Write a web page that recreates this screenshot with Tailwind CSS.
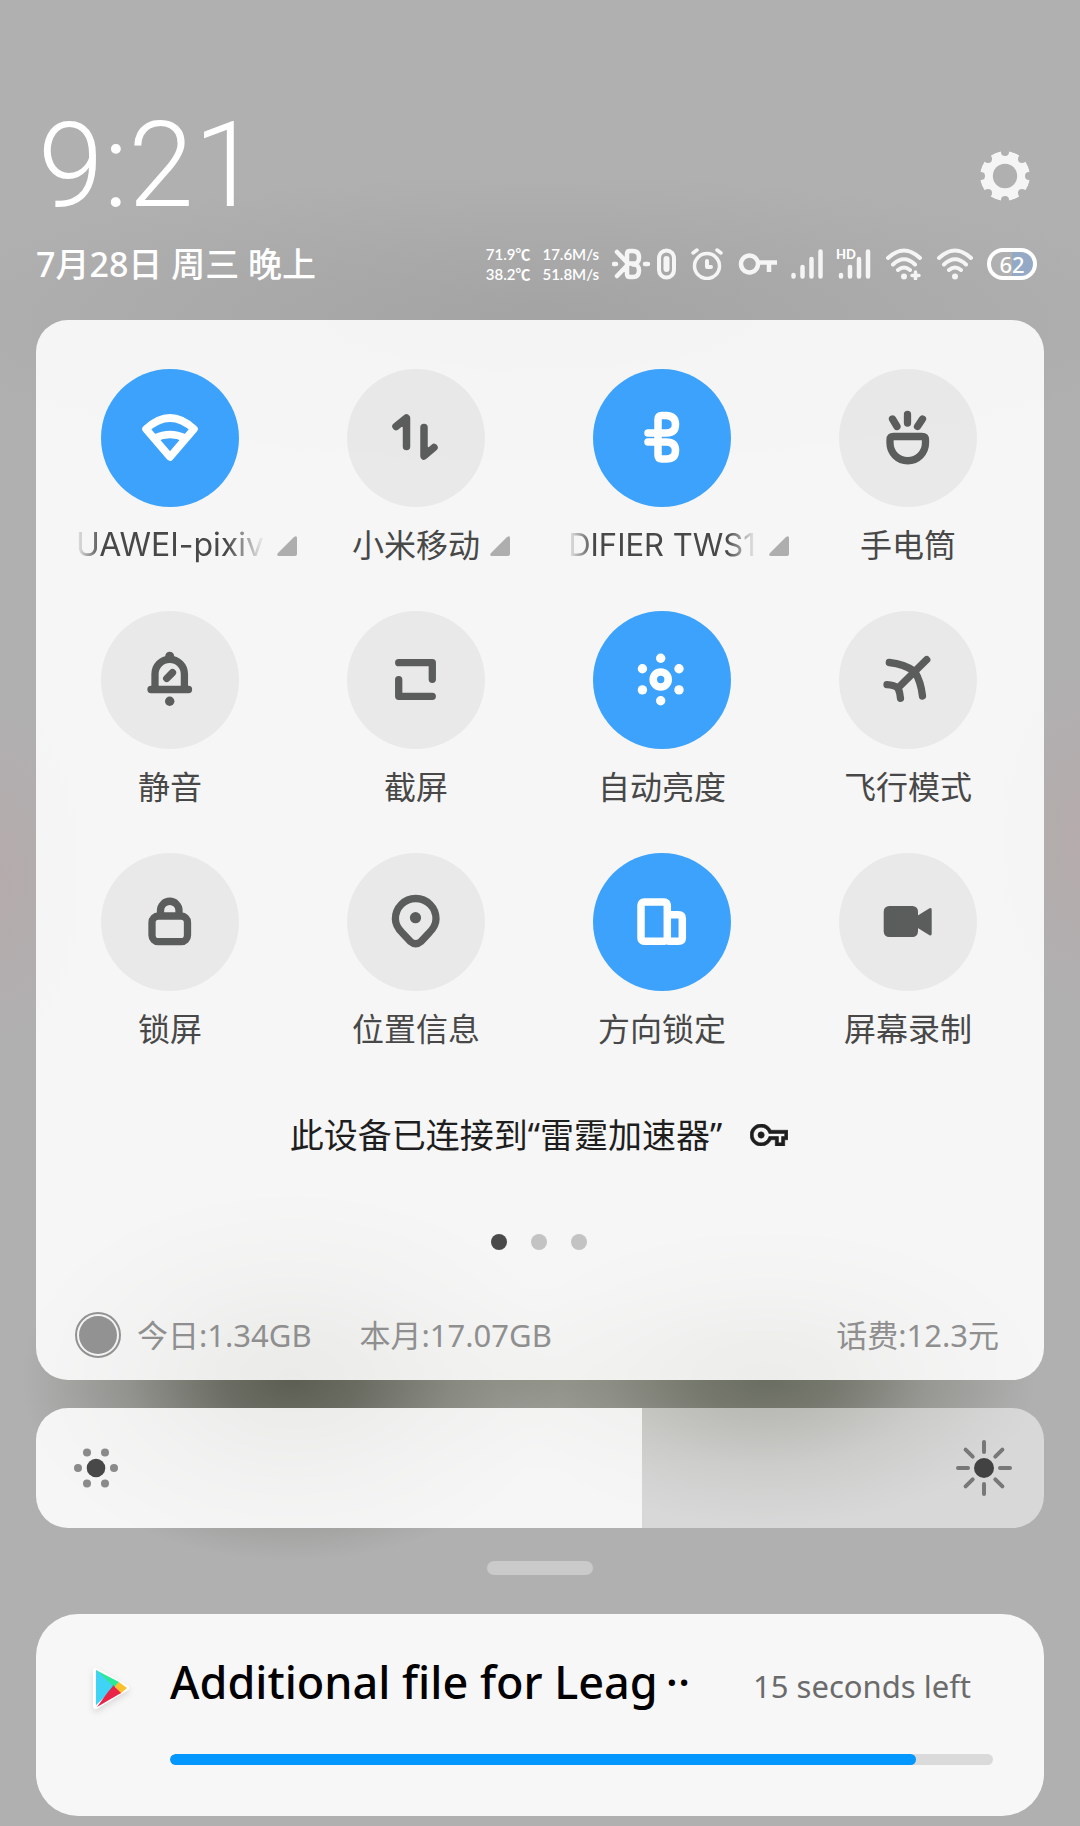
<!DOCTYPE html>
<html lang="zh-CN">

<head>
	<meta charset="UTF-8">
	<meta name="viewport" content="width=device-width, initial-scale=1.0">
	<script src="https://cdn.jsdelivr.net/npm/@tailwindcss/browser@4"></script>
	<title>控制中心</title>
</head>

<body class="min-h-screen bg-[#b0b0b0] bg-[radial-gradient(ellipse_25%_10%_at_27%_75.5%,#5c5e53_0%,#5c5e53cc_25%,#5c5e5355_60%,#5c5e5300_100%),radial-gradient(ellipse_25%_8%_at_71%_75.5%,#6a6d61_0%,#6a6d61cc_25%,#6a6d6150_60%,#6a6d6100_100%),radial-gradient(ellipse_45%_5%_at_50%_75.5%,#9a9b91_0%,#9a9b9100_100%),radial-gradient(ellipse_60%_8%_at_50%_17.5%,#a3a3a3_0%,#a3a3a300_100%),radial-gradient(ellipse_8%_10%_at_0%_48%,#b5abac_0%,#b5abac00_100%),radial-gradient(ellipse_8%_10%_at_100%_46%,#b5abac_0%,#b5abac00_100%)] px-9 pt-[104px] pb-2 font-['Noto_Sans','Noto_Sans_CJK_SC',sans-serif]">

	<!-- Clock and settings -->
	<header class="text-white">
		<div class="flex items-center justify-between pr-[14px] pl-[2px]">
			<time class="text-[118px] leading-[124px] font-light font-['Roboto',sans-serif]">9:21</time>
			<button type="button" aria-label="设置" class="mt-5">
				<svg class="size-[50px]" viewBox="0 0 50 50" aria-hidden="true">
					<mask id="gearMask">
						<circle cx="25" cy="25" r="25" fill="#fff" />
						<g fill="#000">
							<circle cx="25" cy="25" r="12.2" />
							<circle cx="25" cy="1" r="4" />
							<circle cx="42" cy="8" r="4" />
							<circle cx="49" cy="25" r="4" />
							<circle cx="42" cy="42" r="4" />
							<circle cx="25" cy="49" r="4" />
							<circle cx="8" cy="42" r="4" />
							<circle cx="1" cy="25" r="4" />
							<circle cx="8" cy="8" r="4" />
						</g>
					</mask>
					<circle cx="25" cy="25" r="25" fill="#f5f5f5" mask="url(#gearMask)" />
				</svg>
			</button>
		</div>

		<!-- Date and status icons -->
		<div class="flex h-[72px] items-center justify-between pr-[7px]">
			<p class="text-[34px] font-medium whitespace-nowrap">7月28日 周三 晚上</p>
			<div class="flex items-center gap-[13px]">
				<div class="grid grid-cols-[auto_auto] gap-x-3 text-right text-[15px] leading-5 font-semibold whitespace-nowrap font-['Lato','Noto_Sans_CJK_SC',sans-serif]">
					<span>71.9℃</span><span>17.6M/s</span>
					<span>38.2℃</span><span>51.8M/s</span>
				</div>
				<!-- Bluetooth with headset charge -->
				<svg class="h-8 w-16" viewBox="0 0 64 32" fill="none" stroke="#f5f5f5" stroke-width="4.500" stroke-linecap="round" stroke-linejoin="round" aria-hidden="true">
					<path d="M5 4L16 15.500M5 28L16 16.500M15 15.500V6Q15 3 18 3H21Q27 3 27 9.500T21 15.500H15M15 16.500V26Q15 29 18 29H21Q27 29 27 22.500T21 16.500" />
					<path d="M2 16H4M33 16H36" />
					<rect x="47" y="2.500" width="15" height="27" rx="7.500" stroke-width="4" />
					<path d="M54.500 11V21" stroke-width="6" />
				</svg>
				<!-- Alarm -->
				<svg class="h-8 w-9" viewBox="-2 0 36 32" fill="none" stroke="#f5f5f5" stroke-width="3.500" stroke-linecap="round" stroke-linejoin="round" aria-hidden="true">
					<circle cx="16" cy="18" r="12.500" />
					<path d="M16 13V19H20" stroke-width="4" />
					<path d="M2 5L6 2M30 5L26 2" />
				</svg>
				<!-- VPN key -->
				<svg class="h-8 w-10" viewBox="0 0 40 32" fill="none" stroke="#f5f5f5" stroke-width="4.500" stroke-linejoin="round" aria-hidden="true">
					<circle cx="11.500" cy="16" r="8.500" />
					<path d="M20 14.500H39M31 14.500V24" />
				</svg>
				<!-- Signal -->
				<svg class="h-8 w-8" viewBox="0 0 32 32" stroke="#f5f5f5" stroke-width="4.500" stroke-linecap="round" aria-hidden="true">
					<path d="M2.500 27V28.500M11.500 19V28.500M20.500 11V28.500M29.500 3.500V28.500" />
				</svg>
				<svg class="h-8 w-9 overflow-visible" viewBox="0 0 36 32" aria-hidden="true">
					<path d="M5 27V28.500M14 19V28.500M23 11V28.500M32 3.500V28.500" stroke="#f5f5f5" stroke-width="4.500" stroke-linecap="round" />
					<text x="0" y="11" class="fill-white text-[13px] font-black font-['Lato',sans-serif]">HD</text>
				</svg>
				<!-- Wi-Fi -->
				<svg class="h-8 w-[38px]" viewBox="0 0 38 32" fill="none" stroke="#f5f5f5" stroke-width="4" stroke-linecap="round" aria-hidden="true">
					<path d="M3 10Q19 -5 35 10M8 16.500Q19 6 30 16.500M13 22Q19 17 25 22" />
					<circle cx="19" cy="28.500" r="3" fill="#f5f5f5" stroke="none" />
					<path d="M30.500 24V31M27 27.500H34" stroke-width="3.500" />
				</svg>
				<svg class="h-8 w-[38px]" viewBox="0 0 38 32" fill="none" stroke="#f5f5f5" stroke-width="4" stroke-linecap="round" aria-hidden="true">
					<path d="M3 10Q19 -5 35 10M8 16.500Q19 6 30 16.500M13 22Q19 17 25 22" />
					<circle cx="19" cy="28.500" r="3" fill="#f5f5f5" stroke="none" />
				</svg>
				<!-- Battery -->
				<div class="flex h-8 w-[50px] items-center justify-center rounded-full border-4 border-white bg-linear-to-r from-[#b0b0b0] from-50% to-[#93a9c6] to-50% text-[22px] leading-none font-medium">62</div>
			</div>
		</div>
	</header>

	<main>
		<!-- Quick settings -->
		<section class="mt-5 rounded-[32px] bg-white/88 pt-[49px] pr-[13px] pb-5 pl-[11px] text-[#484848]">
			<div class="grid grid-cols-4 gap-y-[43px] text-[32px] leading-[46px] whitespace-nowrap">
				<button type="button" aria-pressed="true" class="flex flex-col items-center gap-[15px]">
					<span class="flex size-[138px] items-center justify-center rounded-full bg-[#3da2fb] text-white">
						<svg class="size-[72px]" viewBox="0 0 72 72" fill="none" stroke="currentColor" stroke-width="7.500" stroke-linecap="round" stroke-linejoin="round" aria-hidden="true">
							<path d="M12 27Q36 5 60 27L36 55Z" />
							<path d="M21 36Q36 29 51 36" />
						</svg>
					</span>
					<span class="relative font-['Inter',sans-serif]">
						<span class="flex w-[190px] justify-center overflow-hidden [mask-image:linear-gradient(to_right,transparent,black_14%,black_80%,transparent)]">UAWEI-pixiv</span>
						<svg class="absolute bottom-3 left-full ml-3 size-5" viewBox="0 0 20 20" aria-hidden="true"><path d="M20 2V18Q20 20 18 20H2Q-1 20 1 17L17 1Q20 -1 20 2Z" fill="#aeaeae" /></svg>
					</span>
				</button>

				<button type="button" aria-pressed="false" class="flex flex-col items-center gap-[15px]">
					<span class="flex size-[138px] items-center justify-center rounded-full bg-black/5 text-[#5b5c5c]">
						<svg class="size-[72px]" viewBox="0 0 72 72" fill="currentColor" stroke="currentColor" stroke-width="7.500" stroke-linecap="round" stroke-linejoin="round" aria-hidden="true">
							<path d="M16 24.500L26.500 16V44.500" fill="none" />
							<path d="M54 45.500L44 54V25.500" fill="none" />
							<path d="M25 19V26L20 24ZM45.500 51V44L50 46Z" stroke="none" />
						</svg>
					</span>
					<span class="relative">
						小米移动
						<svg class="absolute bottom-3 left-full ml-[10px] size-5" viewBox="0 0 20 20" aria-hidden="true"><path d="M20 2V18Q20 20 18 20H2Q-1 20 1 17L17 1Q20 -1 20 2Z" fill="#aeaeae" /></svg>
					</span>
				</button>

				<button type="button" aria-pressed="true" class="flex flex-col items-center gap-[15px]">
					<span class="flex size-[138px] items-center justify-center rounded-full bg-[#3da2fb] text-white">
						<svg class="size-[72px]" viewBox="0 0 72 72" fill="none" stroke="currentColor" stroke-width="7.500" stroke-linecap="round" stroke-linejoin="round" aria-hidden="true">
							<path d="M22 31H40Q49.500 31 49.500 22.500T40 13.500H36Q32 13.500 32 17.500V53Q32 57 36 57H40Q49.500 57 49.500 48.500T40 40H22" />
						</svg>
					</span>
					<span class="relative font-['Inter',sans-serif]">
						<span class="flex w-[190px] justify-center overflow-hidden text-[31px] [mask-image:linear-gradient(to_right,transparent,black_14%,black_84%,transparent)]">DIFIER TWS1</span>
						<svg class="absolute bottom-3 left-full ml-3 size-5" viewBox="0 0 20 20" aria-hidden="true"><path d="M20 2V18Q20 20 18 20H2Q-1 20 1 17L17 1Q20 -1 20 2Z" fill="#aeaeae" /></svg>
					</span>
				</button>

				<button type="button" aria-pressed="false" class="flex flex-col items-center gap-[15px]">
					<span class="flex size-[138px] items-center justify-center rounded-full bg-black/5 text-[#5b5c5c]">
						<svg class="size-[72px]" viewBox="0 0 72 72" fill="none" stroke="currentColor" stroke-width="7.300" stroke-linecap="round" stroke-linejoin="round" aria-hidden="true">
							<path d="M18 38Q18 34.500 21.500 34.500H50Q53.500 34.500 53.500 38V41A17.750 17.750 0 0 1 18 41Z" />
							<path d="M35.500 12.500V21M20.500 17L25 24.500M50.500 17L45.500 24.500" />
						</svg>
					</span>
					<span>手电筒</span>
				</button>

				<button type="button" aria-pressed="false" class="flex flex-col items-center gap-[15px]">
					<span class="flex size-[138px] items-center justify-center rounded-full bg-black/5 text-[#5b5c5c]">
						<svg class="size-[72px]" viewBox="0 0 72 72" fill="none" stroke="currentColor" stroke-width="7.300" stroke-linecap="round" stroke-linejoin="round" aria-hidden="true">
							<path d="M21 45V30A14.700 14.700 0 0 1 50.400 30V45" />
							<path d="M17 45.500H54.500M32.700 34.500L38.500 28.700" />
							<circle cx="35.700" cy="12.300" r="4.500" fill="currentColor" stroke="none" />
							<circle cx="35.700" cy="57.300" r="4.700" fill="currentColor" stroke="none" />
						</svg>
					</span>
					<span>静音</span>
				</button>

				<button type="button" class="flex flex-col items-center gap-[15px]">
					<span class="flex size-[138px] items-center justify-center rounded-full bg-black/5 text-[#5b5c5c]">
						<svg class="size-[72px]" viewBox="0 0 72 72" fill="none" stroke="currentColor" stroke-width="7.300" stroke-linecap="round" stroke-linejoin="round" aria-hidden="true">
							<path d="M18.700 18.700H52.300V35.300M18.700 35.700V52.300H52.300" />
						</svg>
					</span>
					<span>截屏</span>
				</button>

				<button type="button" aria-pressed="true" class="flex flex-col items-center gap-[15px]">
					<span class="flex size-[138px] items-center justify-center rounded-full bg-[#3da2fb] text-white">
						<svg class="size-[72px]" viewBox="0 0 72 72" fill="currentColor" aria-hidden="true">
							<circle cx="34.700" cy="35.500" r="7.500" fill="none" stroke="currentColor" stroke-width="7.600" />
							<circle cx="34.700" cy="14.300" r="4.700" />
							<circle cx="53" cy="24.700" r="4.700" />
							<circle cx="53" cy="45.900" r="4.700" />
							<circle cx="34.700" cy="56.700" r="4.700" />
							<circle cx="16.400" cy="45.900" r="4.700" />
							<circle cx="16.400" cy="24.700" r="4.700" />
						</svg>
					</span>
					<span>自动亮度</span>
				</button>

				<button type="button" aria-pressed="false" class="flex flex-col items-center gap-[15px]">
					<span class="flex size-[138px] items-center justify-center rounded-full bg-black/5 text-[#5b5c5c]">
						<svg class="size-[72px]" viewBox="0 0 72 72" fill="none" stroke="currentColor" stroke-width="7.300" stroke-linecap="round" stroke-linejoin="round" aria-hidden="true">
							<path d="M54.700 15.700L26 44M17.300 18.500Q32 20 42.700 27.500Q49 38 50.500 52M15 40.700Q22 41 26 44Q28 48 28.500 54.300" />
						</svg>
					</span>
					<span>飞行模式</span>
				</button>

				<button type="button" class="flex flex-col items-center gap-[15px]">
					<span class="flex size-[138px] items-center justify-center rounded-full bg-black/5 text-[#5b5c5c]">
						<svg class="size-[72px]" viewBox="0 0 72 72" fill="none" stroke="currentColor" stroke-width="7.300" stroke-linecap="round" stroke-linejoin="round" aria-hidden="true">
							<rect x="18" y="30" width="35.500" height="25.700" rx="6.500" />
							<path d="M26.500 29V24.500A9.250 9.250 0 0 1 45 24.500V29" />
						</svg>
					</span>
					<span>锁屏</span>
				</button>

				<button type="button" aria-pressed="false" class="flex flex-col items-center gap-[15px]">
					<span class="flex size-[138px] items-center justify-center rounded-full bg-black/5 text-[#5b5c5c]">
						<svg class="size-[72px]" viewBox="0 0 72 72" fill="none" stroke="currentColor" stroke-width="7.300" stroke-linecap="round" stroke-linejoin="round" aria-hidden="true">
							<path d="M35.700 12.500A20.300 20.300 0 0 1 56 33C56 40 52 44 49 47L41 55.500Q35.700 60 30.400 55.500L22.400 47C19.400 44 15.400 40 15.400 33A20.300 20.300 0 0 1 35.700 12.500Z" />
							<circle cx="35.500" cy="31.700" r="5.600" fill="currentColor" stroke="none" />
						</svg>
					</span>
					<span>位置信息</span>
				</button>

				<button type="button" aria-pressed="true" class="flex flex-col items-center gap-[15px]">
					<span class="flex size-[138px] items-center justify-center rounded-full bg-[#3da2fb] text-white">
						<svg class="size-[72px]" viewBox="0 0 72 72" fill="none" stroke="currentColor" stroke-width="7.500" stroke-linejoin="round" aria-hidden="true">
							<rect x="15" y="16" width="26.300" height="39.300" rx="3" />
							<path d="M41.300 28.700H52.500Q56.300 28.700 56.300 32.500V52Q56.300 55.300 52.500 55.300H41.300" />
						</svg>
					</span>
					<span>方向锁定</span>
				</button>

				<button type="button" class="flex flex-col items-center gap-[15px]">
					<span class="flex size-[138px] items-center justify-center rounded-full bg-black/5 text-[#5b5c5c]">
						<svg class="size-[72px]" viewBox="0 0 72 72" fill="currentColor" aria-hidden="true">
							<rect x="11.700" y="20" width="34.300" height="31" rx="5.500" />
							<path d="M45 30L57.500 22.300Q59.700 21.500 59.700 24V47.500Q59.700 50 57.500 49.200L45 41.500Z" />
						</svg>
					</span>
					<span>屏幕录制</span>
				</button>
			</div>

			<!-- VPN notice -->
			<p class="mt-[59px] flex items-center justify-center gap-7 text-[34px] leading-[48px] whitespace-nowrap text-[#1e1e1e]">
				此设备已连接到“雷霆加速器”
				<svg class="h-[22px] w-[38px]" viewBox="0 5 24 14" fill="currentColor" stroke="currentColor" stroke-width=".4" aria-hidden="true">
					<path d="M22 19h-6v-4h-2.680c-1.140 2.420-3.600 4-6.320 4-3.860 0-7-3.140-7-7s3.140-7 7-7c2.720 0 5.170 1.580 6.320 4H24v6h-2v4zm-4-2h2v-4h2v-2H11.940l-.23-.67C11.010 8.340 9.110 7 7 7c-2.760 0-5 2.240-5 5s2.240 5 5 5c2.110 0 4.010-1.340 4.710-3.330l.23-.67H18v4z" />
					<circle cx="7" cy="12" r="2" />
				</svg>
			</p>

			<!-- Page dots -->
			<div class="mt-[75px] flex justify-center gap-6">
				<span class="size-4 rounded-full bg-[#4a4a4a]"></span>
				<span class="size-4 rounded-full bg-[#c3c3c3]"></span>
				<span class="size-4 rounded-full bg-[#c3c3c3]"></span>
			</div>

			<!-- Data usage -->
			<div class="mt-[60px] flex items-center px-[28px] text-[31px] leading-[50px] whitespace-nowrap text-[#8f8f8f]">
				<span class="mr-4 size-[46px] rounded-full border-2 border-[#929292] p-[2px]"><span class="block size-full rounded-full bg-[#929292]"></span></span>
				<span class="mr-12">今日:1.34GB</span>
				<span>本月:17.07GB</span>
				<span class="mr-1 ml-auto">话费:12.3元</span>
			</div>
		</section>

		<!-- Brightness -->
		<label class="relative mt-7 flex h-[120px] items-center justify-between overflow-hidden rounded-[32px] px-[30px]">
			<span class="absolute inset-0 flex">
				<span class="bg-white/88" style="width: 60.1%"></span>
				<span class="flex-1 bg-white/50"></span>
			</span>
			<svg class="relative size-[60px]" viewBox="0 0 60 60" fill="#8a8a8a" aria-hidden="true">
				<circle cx="30" cy="30" r="9.300" fill="#484848" />
				<circle cx="12" cy="30" r="4" />
				<circle cx="48" cy="30" r="4" />
				<circle cx="21" cy="14.500" r="4" />
				<circle cx="39" cy="14.500" r="4" />
				<circle cx="21" cy="45.500" r="4" />
				<circle cx="39" cy="45.500" r="4" />
			</svg>
			<svg class="relative size-[60px]" viewBox="0 0 60 60" stroke="#787878" stroke-width="4" stroke-linecap="round" aria-hidden="true">
				<circle cx="30" cy="30" r="10" fill="#424242" stroke="none" />
				<path d="M30 4V14M30 46V56M4 30H14M46 30H56M11.600 11.600L18.700 18.700M41.300 41.300L48.400 48.400M48.400 11.600L41.300 18.700M18.700 41.300L11.600 48.400" />
			</svg>
			<input type="range" min="0" max="100" value="60" aria-label="亮度" class="absolute inset-0 size-full cursor-pointer opacity-0">
		</label>

		<div class="mx-auto mt-[33px] h-[14px] w-[106px] rounded-full bg-[#cacaca]"></div>

		<!-- Download notification -->
		<article class="mt-[39px] flex rounded-[42px] bg-[#f7f7f7] pt-[38px] pr-[51px] pb-[51px] pl-[54px]">
			<svg class="mt-3 h-[48px] w-[44px] shrink-0 drop-shadow-md" viewBox="0 0 44 48" stroke-linejoin="round" aria-hidden="true">
				<path d="M6 7L36 24L6 42Z" fill="#fff" stroke="#fff" stroke-width="6" />
				<path d="M6 6V41L25 23Z" fill="#3fd3f5" />
				<path d="M6 6L29 18L23 26Z" fill="#2ee89a" />
				<path d="M25 22L29 18L37 24L30 30Z" fill="#fcc02f" />
				<path d="M23 21L31 29L7 43Z" fill="#ea2447" />
				<path d="M6 6V41L23 22Z" fill="#3fd3f5" />
			</svg>
			<div class="ml-9 min-w-0 flex-1">
				<div class="flex items-center">
					<h2 class="text-[45px] leading-[60px] font-medium whitespace-nowrap text-black">Additional file for Leag<span class="ml-2">··</span></h2>
					<span class="mt-2 mr-[22px] ml-auto text-[31px] whitespace-nowrap text-[#6b6b6b]">15 seconds left</span>
				</div>
				<div role="progressbar" aria-valuenow="91" aria-valuemin="0" aria-valuemax="100" class="mt-[42px] h-[11px] overflow-hidden rounded-full bg-[#dadada]">
					<div class="h-full rounded-full bg-[#0497fd]" style="width: 90.6%"></div>
				</div>
			</div>
		</article>
	</main>
</body>

</html>
